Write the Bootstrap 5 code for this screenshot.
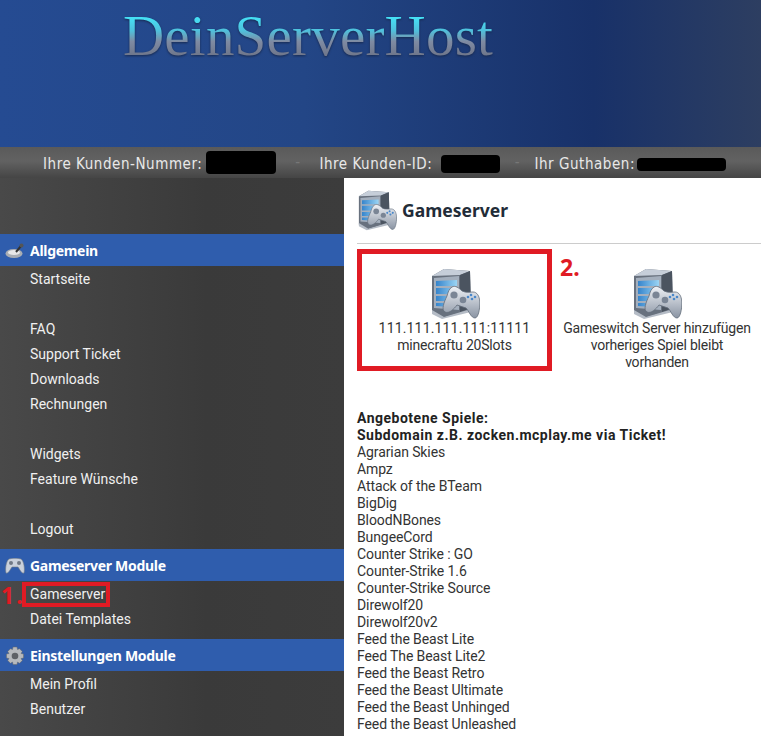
<!DOCTYPE html>
<html lang="de">
<head>
<meta charset="utf-8">
<title>Gameserver</title>
<link href="https://cdn.jsdelivr.net/npm/bootstrap@5.3.0/dist/css/bootstrap.min.css" rel="stylesheet">
<style>
html,body{height:736px;overflow:hidden;margin:0}
body{font-family:Roboto,"Liberation Sans",sans-serif;font-size:14px;color:#333;background:#3b3b3b}
.top-banner{height:147px;background:linear-gradient(90deg,#254b92 0%,#234686 40%,#183169 78%,#2d3e61 100%);padding:3px 0 0 123px}
.logo-text{font-family:"Liberation Serif",serif;font-size:57px;line-height:66px;letter-spacing:.2px;background:linear-gradient(180deg,#45e0f5 22%,#4fc0dc 42%,#7f8ba3 58%,#6d7488 82%);-webkit-background-clip:text;background-clip:text;color:transparent;display:inline-block;filter:drop-shadow(0 1px 1px #17294f)}
.info-bar{height:31px;background:linear-gradient(180deg,#5a5a5a,#626262 45%,#454545);color:#e8e8e8;font-family:"DejaVu Sans Condensed","DejaVu Sans",sans-serif;font-size:15px;letter-spacing:.55px;padding-left:43px;white-space:nowrap}
.info-lbl{margin-top:3px}
.mask{background:#000;border-radius:4px;display:inline-block;flex:none}
.m1{width:70px;height:23px;margin:0 0 0 4px}
.m2{width:59px;height:18px;margin:3px 0 0 9px}
.m3{width:89px;height:13px;margin:3px 0 0 2px}
.dash{color:#777;width:43px;text-align:center;flex:none}
.dash2{color:#777;width:34px;text-align:center;flex:none}
.page-body{height:558px}
.side-col{width:344px;flex:none;background:linear-gradient(90deg,#494949,#3a3a3a 60%,#3c3c3c);padding-top:56px}
.side-head{height:32px;background:#2f5dad;color:#fff;font-family:"Noto Sans",sans-serif;font-weight:700;font-size:14px;letter-spacing:-.3px;gap:5px;padding:1px 0 0 5px}
.side-head svg{flex:none}
.side-item{height:25px;line-height:27px;padding-left:30px;color:#f0f0f0;font-size:14px}
.side-gap{height:25px}
.side-gap-sm{height:8px}
.mark-box{outline:4px solid #e01b24;outline-offset:-4px;position:absolute;left:22px;top:1px;width:88px;height:25px}
.num-one{position:absolute;left:1px;top:1px;color:#e01b24;font-family:"Noto Sans",sans-serif;font-weight:700;font-size:23px;line-height:27px;letter-spacing:2px}
.main-col{flex:1;background:#fff;padding:0 0 0 13px;min-width:0}
.title-row{height:66px;gap:5px;border-bottom:1px solid #ccc}
.title-row h1{font-family:"Noto Sans",sans-serif;font-size:17.5px;font-weight:700;color:#222c38;margin:0}
.tiles{height:128px;padding-top:5px;position:relative}
.tile{text-align:center;color:#333;font-size:14px;line-height:17px;flex:none;white-space:nowrap}
.tile-a{width:195px;height:122px;border:5px solid #e01b24;padding-top:14px;letter-spacing:.17px}
.tile-sub{letter-spacing:-.2px}
.tile-b{width:200px;margin-left:5px;padding-top:19px;letter-spacing:-.2px}
.tile svg{display:block;margin:0 auto}
.num-two{position:absolute;left:203px;top:10px;color:#e01b24;font-family:"Noto Sans",sans-serif;font-weight:700;font-size:23px;line-height:27px}
.games{margin-top:38px;line-height:17px;font-size:14px;color:#333;letter-spacing:-.1px}
.games strong{color:#222;letter-spacing:.5px}
</style>
</head>
<body>
<svg width="0" height="0" class="position-absolute">
<defs>
<linearGradient id="gs" x1="0" x2="0" y1="0" y2="1"><stop offset="0" stop-color="#eef1f6"/><stop offset="1" stop-color="#8a94a3"/></linearGradient>
<linearGradient id="gb" x1="0" x2="1" y1="0" y2="0"><stop offset="0" stop-color="#3584cc"/><stop offset="1" stop-color="#9ad4f4"/></linearGradient>
<symbol id="srv" viewBox="0 0 50 52">
<path d="M2 8 14 1 40 3 41 42 12 50 2 44z" fill="#68717e"/>
<path d="M2 8 14 1 40 3 30 7z" fill="#c6ced9"/>
<path d="M4 10 29 8 29 42 4 40z" fill="#a4afbd"/>
<path d="M30 7 40 3 41 40 30 44z" fill="#4b5460"/>
<path d="M6 13 27 12V18L6 18zM6 20 27 20V26L6 26zM6 28 27 28V33L6 33zM6 35 22 35V39L6 38z" fill="url(#gb)"/>
<path d="M2 42 14 49 41 41 41 44 12 51 2 46z" fill="#b5bcc6"/>
<path d="M22 19C25 17 29 20 32 23 36 25 40 24 43 24 47 24 49.500 28 49.800 34 50 42 48 50 45 50 41 50 39 43 36 40 33 39 30 38 27 37 24 41 19 46 15 44 11 42 14 34 17 28 18 24 19 21 22 19z" fill="url(#gs)" stroke="#626c7a" stroke-width=".8"/>
<circle cx="24" cy="27" r="3.600" fill="#7a8595"/><circle cx="33" cy="32" r="3.300" fill="#7a8595"/>
<circle cx="41" cy="27" r="1.300" fill="#4b88c9"/><circle cx="45" cy="29" r="1.300" fill="#4b88c9"/><circle cx="42" cy="31" r="1.300" fill="#4b88c9"/><circle cx="38" cy="29" r="1.300" fill="#4b88c9"/>
</symbol>
</defs>
</svg>

<div class="top-banner"><span class="logo-text">DeinServerHost</span></div>

<div class="info-bar d-flex align-items-center">
  <span class="info-lbl">Ihre Kunden-Nummer:</span><span class="mask m1"></span>
  <span class="dash">-</span>
  <span class="info-lbl">Ihre Kunden-ID:</span><span class="mask m2"></span>
  <span class="dash2">-</span>
  <span class="info-lbl">Ihr Guthaben:</span><span class="mask m3"></span>
</div>

<div class="page-body d-flex">
  <nav class="side-col">
    <div class="side-head d-flex align-items-center">
      <svg width="20" height="16" viewBox="0 0 20 16"><ellipse cx="9" cy="10.500" rx="8.500" ry="4.500" fill="#a9adb3"/><ellipse cx="9" cy="9.500" rx="6" ry="2.500" fill="#e8e8e8"/><path d="M11 9 16 3" stroke="#333" stroke-width="2"/><circle cx="16.500" cy="2.500" r="2" fill="#555"/></svg>
      <span>Allgemein</span>
    </div>
    <div class="side-item">Startseite</div>
    <div class="side-gap"></div>
    <div class="side-item">FAQ</div>
    <div class="side-item">Support Ticket</div>
    <div class="side-item">Downloads</div>
    <div class="side-item">Rechnungen</div>
    <div class="side-gap"></div>
    <div class="side-item">Widgets</div>
    <div class="side-item">Feature Wünsche</div>
    <div class="side-gap"></div>
    <div class="side-item">Logout</div>
    <div class="side-gap-sm"></div>
    <div class="side-head d-flex align-items-center">
      <svg width="20" height="16" viewBox="0 0 20 16"><path d="M4 1C7 0 13 0 16 1 19 3 20 11 19 15 17 16 15 12 13 9H7C5 12 3 16 1 15 0 11 1 3 4 1z" fill="#c9d0db" stroke="#6f7885" stroke-width=".6"/><circle cx="6" cy="5" r="2" fill="#6f7885"/><circle cx="14" cy="5" r="2" fill="#6f7885"/></svg>
      <span>Gameserver Module</span>
    </div>
    <div class="side-item position-relative">Gameserver<span class="mark-box"></span><span class="num-one">1.</span></div>
    <div class="side-item">Datei Templates</div>
    <div class="side-gap-sm"></div>
    <div class="side-head d-flex align-items-center">
      <svg width="20" height="20" viewBox="0 0 20 20"><path d="M8 1h4l.5 2.500 2-.8 2.800 2.800-1.300 2 2.500.5v4l-2.500.5 1.300 2-2.800 2.800-2-1.300-.5 2.500H8l-.5-2.500-2 1.300-2.800-2.800 1.300-2L1.500 12V8L4 7.500l-1.300-2 2.800-2.800 2 .8z" fill="#b6b9bd" stroke="#666" stroke-width=".5"/><circle cx="10" cy="10" r="3.300" fill="#5e6166"/></svg>
      <span>Einstellungen Module</span>
    </div>
    <div class="side-item">Mein Profil</div>
    <div class="side-item">Benutzer</div>
  </nav>

  <main class="main-col">
    <div class="title-row d-flex align-items-center">
      <svg width="40" height="41"><use href="#srv"/></svg>
      <h1>Gameserver</h1>
    </div>
    <div class="tiles d-flex">
      <div class="tile tile-a">
        <svg width="50" height="52"><use href="#srv"/></svg>
        111.111.111.111:11111<br><span class="tile-sub">minecraftu 20Slots</span>
      </div>
      <span class="num-two">2.</span>
      <div class="tile tile-b">
        <svg width="50" height="52"><use href="#srv"/></svg>
        Gameswitch Server hinzufügen<br>vorheriges Spiel bleibt<br>vorhanden
      </div>
    </div>
    <div class="games">
      <strong>Angebotene Spiele:</strong><br>
      <strong>Subdomain z.B. zocken.mcplay.me via Ticket!</strong><br>
      Agrarian Skies<br>Ampz<br>Attack of the BTeam<br>BigDig<br>BloodNBones<br>BungeeCord<br>Counter Strike : GO<br>Counter-Strike 1.6<br>Counter-Strike Source<br>Direwolf20<br>Direwolf20v2<br>Feed the Beast Lite<br>Feed The Beast Lite2<br>Feed the Beast Retro<br>Feed the Beast Ultimate<br>Feed the Beast Unhinged<br>Feed the Beast Unleashed
    </div>
  </main>
</div>
<script src="https://cdn.jsdelivr.net/npm/bootstrap@5.3.0/dist/js/bootstrap.bundle.min.js"></script>
</body>
</html>
